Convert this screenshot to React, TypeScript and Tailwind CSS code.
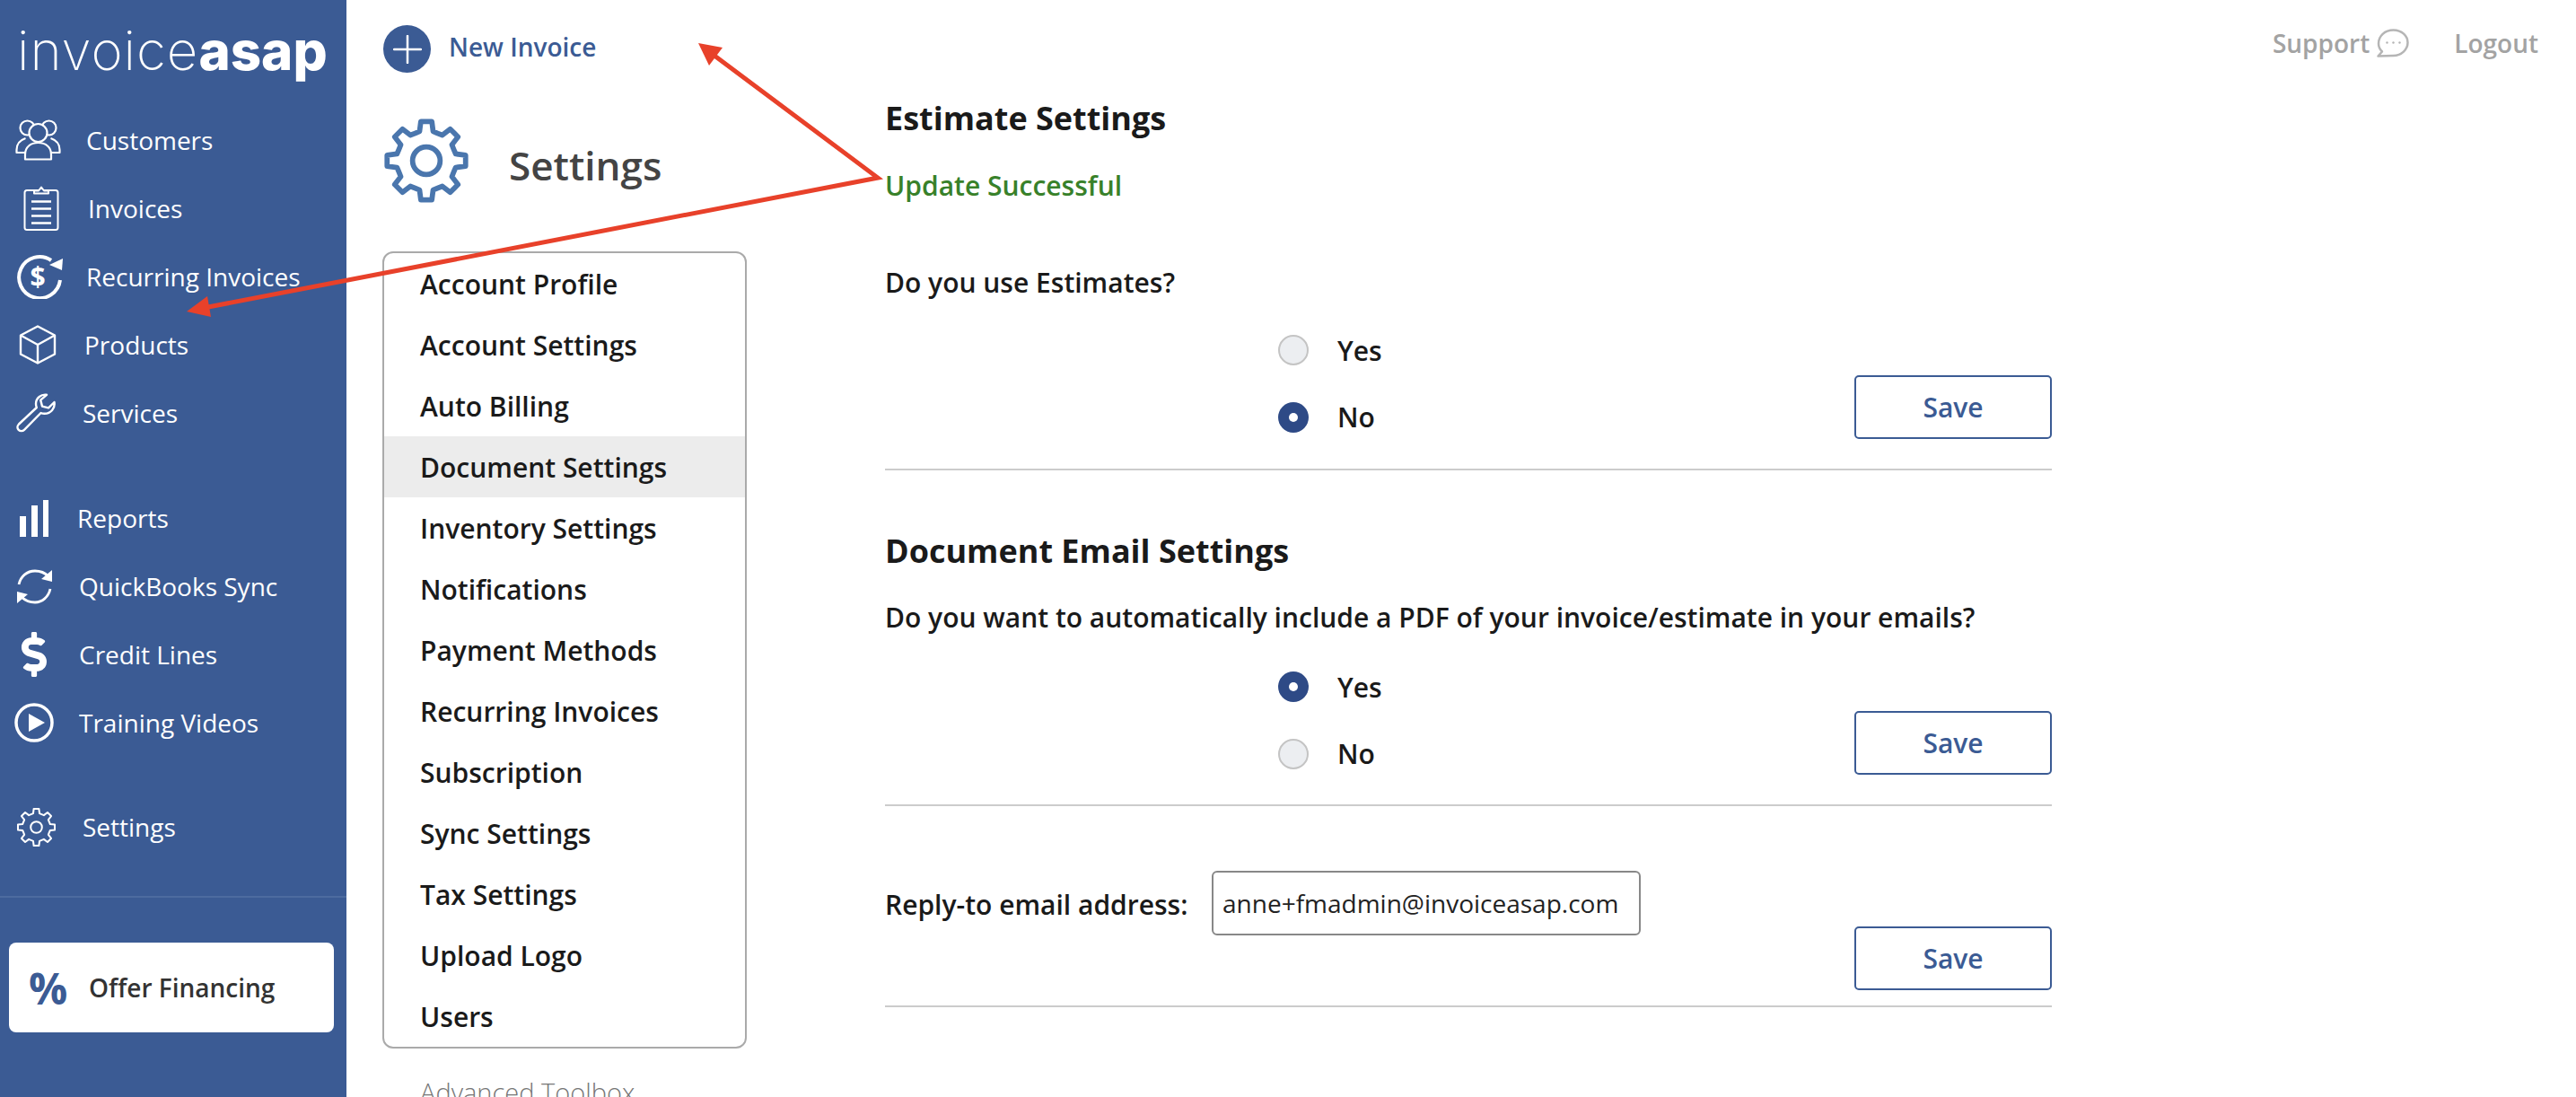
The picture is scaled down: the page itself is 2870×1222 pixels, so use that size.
import React from "react";
import { FaDollarSign } from "react-icons/fa";

function gearPath(cx: number, cy: number, rOut: number, rIn: number) {
  const pts: string[] = [];
  for (let i = 0; i < 8; i++) {
    const a = -90 + i * 45;
    const p = (deg: number, r: number) => {
      const t = ((a + deg) * Math.PI) / 180;
      return `${(cx + r * Math.cos(t)).toFixed(2)} ${(cy + r * Math.sin(t)).toFixed(2)}`;
    };
    pts.push(`${i === 0 ? "M" : "L"}${p(-13, rIn)}`, `L${p(-8, rOut)}`, `L${p(8, rOut)}`, `L${p(13, rIn)}`);
    const mid = p(22.5, rIn * 0.98);
    pts.push(`Q${mid} ${p(32, rIn)}`);
  }
  return pts.join(" ") + "Z";
}

function Gear({ className, sw, hole }: { className: string; sw: number; hole: number }) {
  return (
    <svg viewBox="0 0 100 100" className={className} fill="none" stroke="currentColor" strokeWidth={sw} strokeLinejoin="round">
      <path d={gearPath(50, 50, 46, 35)} />
      <circle cx="50" cy="50" r={hole} />
    </svg>
  );
}

const CustomersIcon = () => (
  <svg viewBox="0 0 51 46" className="w-[51px] h-[46px]" fill="none" stroke="white" strokeWidth="2.2" strokeLinejoin="round">
    <circle cx="13.5" cy="9.5" r="8" />
    <circle cx="37.5" cy="9.5" r="8" />
    <circle cx="25.5" cy="15" r="10" fill="#3b5b94" />
    <path d="M11 37H1.500v-3c0-7 4-11 10-13" />
    <path d="M40 37h9.500v-3c0-7-4-11-10-13" />
    <path d="M11 44.500V39c0-8 6-13 14.500-13S40 31 40 39v5.500z" fill="#3b5b94" />
  </svg>
);
const InvoicesIcon = () => (
  <svg viewBox="0 0 40 52" className="w-[40px] h-[52px]" fill="none" stroke="white" strokeWidth="2" strokeLinejoin="round">
    <rect x="1.500" y="6" width="37" height="44" rx="2.500" />
    <path d="M12 9.500V6.500h5l3-4 3 4h5v3z" fill="#3b5b94" />
    <path d="M9 18.500h22M9 26.500h22M9 34.500h22M9 42.500h22" strokeWidth="2.400" />
  </svg>
);
const RecurringIcon = () => (
  <svg viewBox="0 0 54 50" className="w-[54px] h-[50px]" fill="none" stroke="white" strokeWidth="4">
    <path d="M40 7A23 23 0 1 0 50 29" />
    <path d="M53 5 52 18 38 12z" fill="white" stroke="none" />
    <text x="25" y="36" textAnchor="middle" fill="white" stroke="none" fontSize="30" fontWeight="700" fontFamily="'Open Sans',sans-serif">$</text>
  </svg>
);
const ProductsIcon = () => (
  <svg viewBox="0 0 42 44" className="w-[42px] h-[44px]" fill="none" stroke="white" strokeWidth="2.400" strokeLinejoin="round">
    <path d="M21 1.500 40 11.500v21L21 42.500 2 32.500v-21z" />
    <path d="M2 11.500 21 22l19-10.500M21 22v20.500" />
  </svg>
);
const ServicesIcon = () => (
  <svg viewBox="0 0 45 44" className="w-[45px] h-[44px]" fill="none" stroke="white" strokeWidth="2.400" strokeLinejoin="round">
    <path d="M34 1.800c-6-1-12 3.500-12 10 0 1.500.3 3 .8 4.200L3 34.500c-2 2-2 4.600-.3 6.300 1.800 1.800 4.500 1.800 6.300 0L27.500 22c1.200.5 2.600.8 4 .8 7 0 12.200-6 11-12.800l-6.500 6.300-7-1.700-1.800-7z" />
  </svg>
);
const ReportsIcon = () => (
  <svg viewBox="0 0 32 41" className="w-[32px] h-[41px]" fill="white">
    <rect x="0" y="18" width="7" height="23" />
    <rect x="13" y="6" width="7" height="35" />
    <rect x="26" y="0" width="6.500" height="41" />
  </svg>
);
const SyncIcon = () => (
  <svg viewBox="0 0 41 41" className="w-[41px] h-[41px]" fill="none" stroke="white" strokeWidth="2.800">
    <path d="M3 18C5 9 12 3 21 3c6 0 11 2 15 6" />
    <path d="M38 23c-2 9-9 15-17 15-6 0-11-2-15-6" />
    <path d="M40 2v13l-12-3zM1 39V26l12 3z" fill="white" stroke="none" />
  </svg>
);
const PlayIcon = () => (
  <svg viewBox="0 0 44 44" className="w-[44px] h-[44px]" fill="none" stroke="white" strokeWidth="3.500">
    <circle cx="22" cy="22" r="20" />
    <path d="M16 12v20l18-10z" fill="white" stroke="none" />
  </svg>
);

const navTop = [
  { label: "Customers", slot: "w-[96px] pl-[17px]", icon: <CustomersIcon /> },
  { label: "Invoices", slot: "w-[98px] pl-[26px]", icon: <InvoicesIcon /> },
  { label: "Recurring Invoices", slot: "w-[96px] pl-[17px]", icon: <RecurringIcon /> },
  { label: "Products", slot: "w-[94px] pl-[21px]", icon: <ProductsIcon /> },
  { label: "Services", slot: "w-[92px] pl-[18px]", icon: <ServicesIcon /> },
];
const navMid = [
  { label: "Reports", slot: "w-[86px] pl-[22px]", icon: <ReportsIcon /> },
  { label: "QuickBooks Sync", slot: "w-[88px] pl-[18px]", icon: <SyncIcon /> },
  { label: "Credit Lines", slot: "w-[88px] pl-[18px]", icon: <FaDollarSign className="text-white w-[40px] h-[50px]" /> },
  { label: "Training Videos", slot: "w-[88px] pl-[16px]", icon: <PlayIcon /> },
];
const menu = [
  "Account Profile", "Account Settings", "Auto Billing", "Document Settings", "Inventory Settings", "Notifications",
  "Payment Methods", "Recurring Invoices", "Subscription", "Sync Settings", "Tax Settings", "Upload Logo", "Users",
];

function NavRow({ label, slot, icon }: { label: string; slot: string; icon: React.ReactNode }) {
  return (
    <div className="flex items-center h-[76px] text-white text-[28px]">
      <span className={`${slot} shrink-0 flex items-center`}>{icon}</span>
      <span>{label}</span>
    </div>
  );
}

function Radio({ label, on }: { label: string; on?: boolean }) {
  return (
    <div className="flex items-center h-[74.500px] text-[30px] font-semibold text-[#1a1a1a]">
      {on ? (
        <span className="w-[34px] h-[34px] rounded-full bg-[#2e4a86] flex items-center justify-center">
          <span className="w-[10px] h-[10px] rounded-full bg-white" />
        </span>
      ) : (
        <span className="w-[34px] h-[34px] rounded-full bg-[#eceef1] border-2 border-[#c4c4c4]" />
      )}
      <span className="ml-[32px]">{label}</span>
    </div>
  );
}

function SaveBtn({ className }: { className: string }) {
  return (
    <button className={`w-[220px] h-[71px] border-2 border-[#3b5b94] rounded-[5px] text-[#3b5b94] text-[30px] font-semibold bg-white ${className}`}>
      Save
    </button>
  );
}

function RadioBlock({ first, second, className, saveClass }: { first: React.ReactNode; second: React.ReactNode; className: string; saveClass: string }) {
  return (
    <div className={`flex justify-between items-end ${className}`}>
      <div className="pl-[438px]">
        {first}
        {second}
      </div>
      <SaveBtn className={saveClass} />
    </div>
  );
}

export default function App() {
  return (
    <div className="relative flex w-[2870px] h-[1222px] overflow-hidden bg-white font-['Open_Sans',sans-serif]">
      <aside className="w-[386px] shrink-0 bg-[#3b5b94]">
        <div className="h-[118px] pl-[19px] pt-[16px] text-white text-[60px] leading-[80px] font-['Inter',sans-serif] whitespace-nowrap">
          <span className="font-extralight tracking-[1px]">invoice</span>
          <span className="font-extrabold">asap</span>
        </div>
        {navTop.map((n) => <NavRow key={n.label} {...n} />)}
        <div className="mt-[41px]">
          {navMid.map((n) => <NavRow key={n.label} {...n} />)}
        </div>
        <div className="mt-[40px]">
          <NavRow label="Settings" slot="w-[92px] pl-[18px]" icon={<Gear className="w-[45px] h-[45px]" sw={4.500} hole={14} />} />
        </div>
        <div className="mt-[39px] h-[2px] bg-[#4d6b9f]" />
        <div className="mt-[50px] ml-[10px] mr-[14px] h-[100px] bg-white rounded-[8px] flex items-center">
          <span className="w-[89px] pl-[22px] mt-[2px] text-[48px] font-bold text-[#3b5b94] leading-none">%</span>
          <span className="text-[28px] font-semibold text-[#333]">Offer Financing</span>
        </div>
      </aside>

      <section className="w-[600px] shrink-0 pl-[41px] pt-[28px]">
        <div className="flex items-center h-[53px]">
          <span className="w-[53px] h-[53px] rounded-full bg-[#3b5b94] flex items-center justify-center">
            <svg viewBox="0 0 32 32" className="w-[32px] h-[32px]" stroke="white" strokeWidth="2.500" strokeLinecap="round">
              <path d="M16 1v30M1 16h30" />
            </svg>
          </span>
          <span className="ml-[20px] -mt-[5px] text-[28px] font-semibold text-[#3b5b94]">New Invoice</span>
        </div>
        <div className="mt-[50px] flex items-center h-[96px]">
          <Gear className="w-[96px] h-[96px] text-[#4a76ad]" sw={6} hole={16} />
          <span className="ml-[44px] mt-[10px] text-[44px] font-semibold text-[#444]">Settings</span>
        </div>
        <div className="mt-[53px] -ml-[1px] w-[406px] border-2 border-[#aaaaaa] rounded-[12px] overflow-hidden">
          {menu.map((m) => (
            <div
              key={m}
              className={`h-[68px] flex items-center pl-[40px] text-[30px] font-semibold text-[#1a1a1a] ${m === "Document Settings" ? "bg-[#ececec]" : ""}`}
            >
              {m}
            </div>
          ))}
        </div>
        <div className="mt-[29px] pl-[41px] text-[29px] font-light text-[#777] leading-[40px]">Advanced Toolbox</div>
      </section>

      <main className="w-[1300px] shrink-0 pt-[110px]">
        <h2 className="h-[44px] leading-[44px] text-[36px] font-bold text-[#1a1a1a]">Estimate Settings</h2>
        <p className="mt-[33px] h-[40px] leading-[40px] text-[30px] font-semibold text-[#38812a]">Update Successful</p>
        <p className="mt-[68px] h-[40px] leading-[40px] text-[30px] font-semibold text-[#1a1a1a]">Do you use Estimates?</p>
        <RadioBlock className="mt-[18px]" saveClass="mb-[13px]" first={<Radio label="Yes" />} second={<Radio label="No" on />} />
        <div className="mt-[20px] h-[2px] bg-[#cccccc]" />

        <h2 className="mt-[68px] h-[44px] leading-[44px] text-[36px] font-bold text-[#1a1a1a]">Document Email Settings</h2>
        <p className="mt-[32px] h-[40px] leading-[40px] text-[30px] font-semibold text-[#1a1a1a]">Do you want to automatically include a PDF of your invoice/estimate in your emails?</p>
        <RadioBlock className="mt-[20px]" saveClass="mb-[14px]" first={<Radio label="Yes" on />} second={<Radio label="No" />} />
        <div className="mt-[19px] h-[2px] bg-[#cccccc]" />

        <div className="mt-[72px] flex items-center h-[72px]">
          <span className="w-[364px] mt-[3px] text-[30px] font-semibold text-[#1a1a1a]">Reply-to email address:</span>
          <div className="w-[478px] h-[72px] border-2 border-[#888888] rounded-[6px] pl-[10px] flex items-center text-[28px] text-[#222]">
            anne+fmadmin@invoiceasap.com
          </div>
        </div>
        <div className="flex justify-end -mt-[10px]">
          <SaveBtn className="" />
        </div>
        <div className="mt-[17px] h-[2px] bg-[#cccccc]" />
      </main>

      <div className="flex-1 flex justify-end pr-[42px] pt-[27px]">
        <div className="flex items-center h-[42px] text-[28px] font-semibold text-[#a3a3a3]">
          <span>Support</span>
          <svg viewBox="0 0 36 32" className="w-[36px] h-[32px] ml-[8px]" fill="none" stroke="#b5b5b5" strokeWidth="2.500" strokeLinejoin="round">
            <path d="M1.500 30.500 6 25.500C3.500 23 2 20 2 16.500 2 8 9 1.500 18.500 1.500S34.500 8 34.500 15.500 27.500 30 18.500 30z" />
            <circle cx="11.500" cy="15.500" r="1.200" fill="#b5b5b5" stroke="none" />
            <circle cx="18.500" cy="15.500" r="1.200" fill="#b5b5b5" stroke="none" />
            <circle cx="25.500" cy="15.500" r="1.200" fill="#b5b5b5" stroke="none" />
          </svg>
          <span className="ml-[50px]">Logout</span>
        </div>
      </div>

      <svg className="absolute inset-0 w-[2870px] h-[1222px] pointer-events-none" viewBox="0 0 2870 1222" fill="none">
        <path d="M796 62 978 198 232 342" stroke="#e8412a" strokeWidth="5" strokeLinejoin="miter" />
        <path d="M778 48 805 53 790 73z" fill="#e8412a" />
        <path d="M208 347 231 330 235 353z" fill="#e8412a" />
      </svg>
    </div>
  );
}
